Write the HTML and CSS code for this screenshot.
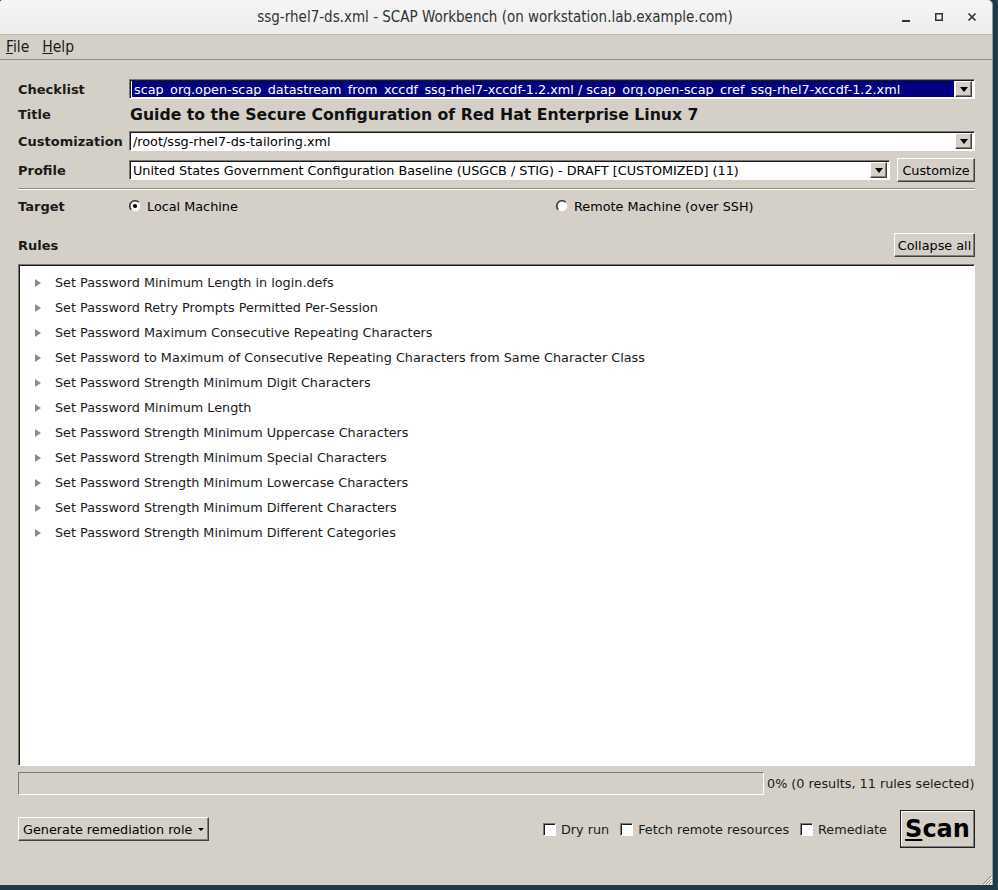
FILE: index.html
```html
<!DOCTYPE html>
<html>
<head>
<meta charset="utf-8">
<link rel="stylesheet" href="styles.css">
</head>
<body>
<div class="window">
  <div class="titlebar">
    <div class="title">ssg-rhel7-ds.xml - SCAP Workbench (on workstation.lab.example.com)</div>
    <div class="wm-buttons">
      <svg class="wm" width="12" height="12" viewBox="0 0 12 12"><rect x="2" y="9" width="8" height="2" fill="#2e3436"/></svg>
      <svg class="wm" width="12" height="12" viewBox="0 0 12 12"><rect x="2.75" y="2.75" width="6.5" height="6.5" fill="none" stroke="#2e3436" stroke-width="1.5"/></svg>
      <svg class="wm" width="12" height="12" viewBox="0 0 12 12"><path d="M2.5 2.5 L9.5 9.5 M9.5 2.5 L2.5 9.5" stroke="#2e3436" stroke-width="1.7"/></svg>
    </div>
  </div>
  <div class="menubar">
    <span class="menu"><u>F</u>ile</span>
    <span class="menu"><u>H</u>elp</span>
  </div>

  <div class="content">
    <div class="form">
      <div class="label">Checklist</div>
      <div class="combo">
        <div class="combo-field"><div class="hl"><span class="hl-text">scap_org.open-scap_datastream_from_xccdf_ssg-rhel7-xccdf-1.2.xml / scap_org.open-scap_cref_ssg-rhel7-xccdf-1.2.xml</span></div></div>
        <div class="combo-arrow"><span class="tri-down"></span></div>
      </div>

      <div class="label">Title</div>
      <div class="doc-title">Guide to the Secure Configuration of Red Hat Enterprise Linux 7</div>

      <div class="label">Customization</div>
      <div class="combo">
        <div class="combo-field"><span class="plain">/root/ssg-rhel7-ds-tailoring.xml</span></div>
        <div class="combo-arrow"><span class="tri-down"></span></div>
      </div>

      <div class="label profile-label">Profile</div>
      <div class="profile-row">
        <div class="combo">
          <div class="combo-field"><span class="plain">United States Government Configuration Baseline (USGCB / STIG) - DRAFT [CUSTOMIZED] (11)</span></div>
          <div class="combo-arrow"><span class="tri-down"></span></div>
        </div>
        <button class="btn customize">Customize</button>
      </div>
    </div>

    <div class="separator"></div>

    <div class="target-row">
      <div class="label">Target</div>
      <div class="radios">
        <label class="radio">
          <svg width="12" height="12" viewBox="0 0 12 12"><circle cx="6" cy="6" r="5.2" fill="#fff"/><path d="M2.3 9.7 A5.2 5.2 0 0 1 9.7 2.3" stroke="#3a3a3a" stroke-width="1.6" fill="none"/><circle cx="6" cy="6" r="2.1" fill="#000"/></svg>
          <span>Local Machine</span>
        </label>
        <label class="radio">
          <svg width="12" height="12" viewBox="0 0 12 12"><circle cx="6" cy="6" r="5.2" fill="#fff"/><path d="M2.3 9.7 A5.2 5.2 0 0 1 9.7 2.3" stroke="#3a3a3a" stroke-width="1.6" fill="none"/></svg>
          <span>Remote Machine (over SSH)</span>
        </label>
      </div>
    </div>

    <div class="rules-row">
      <div class="label">Rules</div>
      <button class="btn">Collapse all</button>
    </div>

    <div class="tree">
      <div class="item"><span class="tri-right"></span>Set Password Minimum Length in login.defs</div>
      <div class="item"><span class="tri-right"></span>Set Password Retry Prompts Permitted Per-Session</div>
      <div class="item"><span class="tri-right"></span>Set Password Maximum Consecutive Repeating Characters</div>
      <div class="item"><span class="tri-right"></span>Set Password to Maximum of Consecutive Repeating Characters from Same Character Class</div>
      <div class="item"><span class="tri-right"></span>Set Password Strength Minimum Digit Characters</div>
      <div class="item"><span class="tri-right"></span>Set Password Minimum Length</div>
      <div class="item"><span class="tri-right"></span>Set Password Strength Minimum Uppercase Characters</div>
      <div class="item"><span class="tri-right"></span>Set Password Strength Minimum Special Characters</div>
      <div class="item"><span class="tri-right"></span>Set Password Strength Minimum Lowercase Characters</div>
      <div class="item"><span class="tri-right"></span>Set Password Strength Minimum Different Characters</div>
      <div class="item"><span class="tri-right"></span>Set Password Strength Minimum Different Categories</div>
    </div>

    <div class="progress-row">
      <div class="progress"></div>
      <div class="progress-text">0% (0 results, 11 rules selected)</div>
    </div>

    <div class="action-row">
      <button class="btn menu-btn">Generate remediation role<span class="tri-small"></span></button>
      <div class="options">
        <label class="check"><span class="box"></span>Dry run</label>
        <label class="check"><span class="box"></span>Fetch remote resources</label>
        <label class="check"><span class="box"></span>Remediate</label>
        <button class="btn scan"><u>S</u>can</button>
      </div>
    </div>
  </div>
  <svg class="grip" width="10" height="10" viewBox="0 0 10 10">
    <path d="M9 1 L1 9 M9 4 L4 9 M9 7 L7 9" stroke="#8a8680" stroke-width="1"/>
    <path d="M10 2 L2 10 M10 5 L5 10 M10 8 L8 10" stroke="#ffffff" stroke-width="1"/>
  </svg>
</div>
</body>
</html>
```

FILE: styles.css
```css
* { box-sizing: border-box; }

html, body {
  margin: 0;
  padding: 0;
}

body {
  background: #1e3c48;
  width: 998px;
  height: 890px;
  overflow: hidden;
  font-family: "DejaVu Sans", "Noto Sans", sans-serif;
  font-size: 12.8px;
  color: #000;
}

.window {
  position: relative;
  width: 993px;
  height: 885px;
  background: #d4d0c8;
  border-right: 1px solid #9e9a93;
  border-radius: 3px 5px 0 0;
  display: flex;
  flex-direction: column;
}

.titlebar {
  height: 35px;
  background: linear-gradient(#f6f6f6, #ececec);
  border-bottom: 1px solid #bdb9b2;
  border-radius: 3px 5px 0 0;
  display: flex;
  align-items: center;
  justify-content: center;
  position: relative;
}

.title {
  font-family: "DejaVu Sans Condensed", "DejaVu Sans", sans-serif;
  font-stretch: condensed;
  font-size: 15px;
  color: #2e3436;
  margin-left: -2px;
  margin-top: -1px;
}

.wm-buttons {
  position: absolute;
  right: 14px;
  top: 11px;
  display: flex;
  gap: 21px;
}

.menubar {
  height: 25px;
  border-bottom: 1px solid #8e8b85;
  display: flex;
  align-items: center;
  padding-left: 6px;
  gap: 13px;
  font-family: "DejaVu Sans Condensed", "DejaVu Sans", sans-serif;
  font-stretch: condensed;
  font-size: 15.5px;
  color: #1a1a1a;
}

.content {
  padding: 19px 17px 0 18px;
  display: flex;
  flex-direction: column;
}

.label {
  font-weight: bold;
  font-size: 13px;
  color: #1a1a1a;
}

.form {
  display: grid;
  grid-template-columns: 111px 1fr;
  grid-template-rows: 20px 30px 22px 31px;
  align-items: center;
}

.form > :nth-child(5),
.form > :nth-child(6) { margin-top: 2px; }
.form > :nth-child(7),
.form > :nth-child(8) { margin-top: 7px; }

.combo {
  height: 20px;
  display: flex;
  align-items: stretch;
  border: 1px solid;
  border-color: #7b7871 #ffffff #ffffff #7b7871;
  box-shadow: inset 1px 1px 0 #1a1a1a;
  background: #fff;
  padding: 1px 2px 1px 2px;
}

.combo-field {
  flex: 1;
  overflow: hidden;
  white-space: nowrap;
  display: flex;
  align-items: center;
}

.hl {
  background: #000080;
  color: #fff;
  height: 17px;
  width: 100%;
  overflow: hidden;
  padding: 1px 0 0 2px;
}

.hl-text {
  display: block;
  height: 14px;
  line-height: 15px;
  overflow: hidden;
}

.plain {
  padding-left: 1px;
  color: #000;
}

.combo-arrow {
  width: 17px;
  background: #d4d0c8;
  border: 1px solid;
  border-color: #ffffff #404040 #404040 #ffffff;
  box-shadow: inset -1px -1px 0 #808080;
  display: flex;
  align-items: center;
  justify-content: center;
  margin-left: 1px;
}

.tri-down {
  width: 0;
  height: 0;
  border-left: 4px solid transparent;
  border-right: 4px solid transparent;
  border-top: 5px solid #000;
}

.doc-title {
  font-weight: bold;
  font-size: 15.7px;
  padding-left: 1px;
  color: #111;
}

.profile-row {
  display: flex;
  align-items: center;
  gap: 7px;
}

.profile-row .combo { flex: 1; }

.btn {
  font-family: "DejaVu Sans", sans-serif;
  font-size: 12.8px;
  color: #000;
  background: #d4d0c8;
  border: 1px solid;
  border-color: #ffffff #404040 #404040 #ffffff;
  box-shadow: inset -1px -1px 0 #808080;
  padding: 0 4px;
  height: 24px;
  margin: 0;
  white-space: nowrap;
}

.customize { width: 78px; padding: 0; }

.separator {
  height: 2px;
  margin-top: 6px;
  border-top: 1px solid #8e8b85;
  border-bottom: 1px solid #ffffff;
}

.target-row {
  margin-top: 6px;
  height: 20px;
  display: grid;
  grid-template-columns: 111px 1fr;
  align-items: center;
}

.radios {
  display: grid;
  grid-template-columns: 427px 1fr;
}

.radio {
  display: flex;
  align-items: center;
  gap: 6px;
}

.rules-row {
  margin-top: 17px;
  display: flex;
  justify-content: space-between;
  align-items: center;
}

.rules-row .btn { width: 81px; padding: 0; }

.tree {
  margin-top: 7px;
  height: 502px;
  background: #fff;
  border: 1px solid;
  border-color: #7b7871 #ffffff #ffffff #7b7871;
  box-shadow: inset 1px 1px 0 #1a1a1a;
  padding-top: 5px;
}

.item {
  height: 25px;
  display: flex;
  align-items: center;
  padding-left: 16px;
  color: #1a1a1a;
  white-space: nowrap;
}

.tri-right {
  width: 0;
  height: 0;
  border-top: 4px solid transparent;
  border-bottom: 4px solid transparent;
  border-left: 6px solid #8c8c8c;
  margin-right: 14px;
}

.progress-row {
  margin-top: 6px;
  display: flex;
  align-items: center;
  height: 23px;
}

.progress {
  width: 746px;
  height: 23px;
  border: 1px solid;
  border-color: #7b7871 #ffffff #ffffff #7b7871;
}

.progress-text {
  margin-left: 3px;
  white-space: nowrap;
  color: #1a1a1a;
}

.action-row {
  margin-top: 15px;
  height: 38px;
  display: flex;
  align-items: center;
  justify-content: space-between;
}

.menu-btn {
  width: 191px;
  text-align: left;
  padding-left: 4px;
  display: flex;
  align-items: center;
}

.tri-small {
  display: inline-block;
  width: 0;
  height: 0;
  border-left: 3px solid transparent;
  border-right: 3px solid transparent;
  border-top: 3px solid #000;
  margin-left: 6px;
}

.options {
  display: flex;
  align-items: center;
}

.check {
  display: flex;
  align-items: center;
  margin-right: 11px;
  color: #1a1a1a;
}

.box {
  width: 13px;
  height: 13px;
  background: #fff;
  border: 1px solid;
  border-color: #7b7871 #ffffff #ffffff #7b7871;
  box-shadow: inset 1px 1px 0 #1a1a1a;
  margin-right: 5px;
}

.scan {
  width: 75px;
  height: 38px;
  font-size: 24px;
  font-weight: bold;
  padding: 0;
  margin-left: 2px;
  border-color: #ffffff #202020 #202020 #ffffff;
  outline: 1px solid #202020;
  outline-offset: -1px;
  box-shadow: inset -1px -1px 0 #808080, inset 1px 1px 0 #ffffff;
}

.grip {
  position: absolute;
  right: 0;
  bottom: 0;
}
```
